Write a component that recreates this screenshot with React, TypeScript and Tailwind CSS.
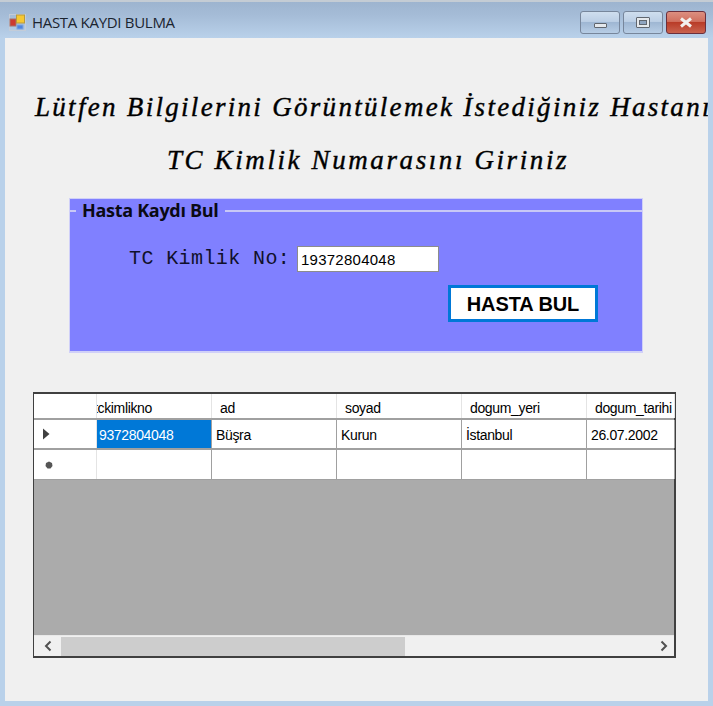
const columns = [
  { name: "tckimlikno", width: "w-[115px]", head: "pl-0", clip: true },
  { name: "ad", width: "w-[125px]", head: "pl-[8px]" },
  { name: "soyad", width: "w-[125px]", head: "pl-[8px]" },
  { name: "dogum_yeri", width: "w-[125px]", head: "pl-[8px]" },
  { name: "dogum_tarihi", width: "w-[88px]", head: "pl-[8px]" },
];

const values = ["9372804048", "Büşra", "Kurun", "İstanbul", "26.07.2002"];

function WindowButton({ kind }: { kind: "min" | "max" | "close" }) {
  if (kind === "close") {
    return (
      <div className="w-[40px] h-[23px] rounded-[3px] border border-[#6b2f3c] flex items-center justify-center bg-[linear-gradient(#dc8f80_0%,#d0705f_45%,#b93c28_50%,#c9634f_100%)]">
        <svg width="14" height="11" viewBox="0 0 14 11">
          <path d="M2 1.5 L12 9.5 M12 1.5 L2 9.5" stroke="#f2f0ee" strokeWidth="3" />
        </svg>
      </div>
    );
  }
  return (
    <div className="w-[40px] h-[23px] rounded-[3px] border border-[#77869b] flex items-center justify-center bg-[linear-gradient(#cfdeee_0%,#bccfe5_45%,#9fb7d3_50%,#b7cde5_100%)]">
      {kind === "min" ? (
        <div className="w-[13px] h-[5px] mt-[5px] bg-[#e4e8ec] border border-[#60666e] rounded-[1px]" />
      ) : (
        <div className="w-[14px] h-[11px] bg-[#e4e8ec] border border-[#60666e] rounded-[1px] flex items-center justify-center">
          <div className="w-[8px] h-[5px] bg-[#8ea4bf] border border-[#60666e]" />
        </div>
      )}
    </div>
  );
}

function AppIcon() {
  return (
    <svg width="17" height="17" viewBox="0 0 17 17" className="shrink-0">
      <rect x="0.5" y="0.5" width="16" height="16" fill="none" stroke="#c3ccd8" />
      <rect x="1" y="5" width="6" height="7" fill="#cc3a30" stroke="#a5706a" />
      <rect x="7.5" y="1" width="8" height="8" fill="#f6c832" stroke="#b99a3a" />
      <rect x="8" y="11" width="6" height="4" fill="#4f86e0" stroke="#7fa4dc" />
    </svg>
  );
}

export default function App() {
  return (
    <div className="w-[713px] h-[706px] overflow-hidden flex flex-col bg-[#b9d1ea]">
      <div className="h-[38px] shrink-0 flex bg-[linear-gradient(#9db4cf_0%,#a6bdd8_40%,#b9d1ea_100%)] border-t-2 border-[#c4ccd4]">
        <div className="pl-[9px] pt-[4px] flex items-center gap-[6px] h-[36px] flex-1">
          <AppIcon />
          <span className="text-[15px] text-[#1b2430] font-['Open_Sans',sans-serif] tracking-[-0.3px]">
            HASTA KAYDI BULMA
          </span>
        </div>
        <div className="flex gap-[3px] pt-[9px] pr-[7px]">
          <WindowButton kind="min" />
          <WindowButton kind="max" />
          <WindowButton kind="close" />
        </div>
      </div>

      <div className="mx-[5px] mb-[5px] flex-1 bg-[#f0f0f0] overflow-hidden flex flex-col">
        <div className="pl-[30px] pt-[53px] h-[161px] shrink-0 font-['Liberation_Serif',serif] italic text-black whitespace-nowrap [-webkit-text-stroke:0.4px_black]">
          <div className="text-[27px] leading-[32px] tracking-[2.3px]">
            Lütfen Bilgilerini Görüntülemek İstediğiniz Hastanın
          </div>
          <div className="text-[27px] leading-[32px] tracking-[2.6px] pl-[132px] mt-[21px]">
            TC Kimlik Numarasını Giriniz
          </div>
        </div>

        <div className="ml-[64px] mt-[-1px] w-[574px] h-[155px] shrink-0 bg-[#8080ff] border-b-2 border-x border-t border-[#d0d0f8] relative">
          <div className="absolute left-0 right-0 top-[11px] border-t-2 border-[#c8c8f6]" />
          <div className="absolute left-[6px] top-0 px-[6px] bg-[#8080ff] text-[18px] leading-[22px] font-bold text-[#0a0a14] font-['Open_Sans',sans-serif] tracking-[-0.3px]">
            Hasta Kaydı Bul
          </div>
          <div className="pt-[47px] pl-[59px] flex items-center h-[73px]">
            <span className="text-[20px] font-['Liberation_Mono',monospace] text-[#10102a] w-[168px] tracking-[0.4px] whitespace-nowrap">
              TC Kimlik No:
            </span>
            <div className="w-[142px] h-[26px] bg-white border border-[#8c8c8c] text-[15px] leading-[26px] pl-[3px] font-['Liberation_Sans',sans-serif] tracking-[0.25px] text-black">
              19372804048
            </div>
          </div>
          <div className="mt-[13px] ml-[378px] w-[150px] h-[37px] bg-white border-[3px] border-[#0078d7] flex items-center justify-center text-[20px] font-bold font-['Liberation_Sans',sans-serif] text-black tracking-[-0.1px]">
            HASTA BUL
          </div>
        </div>

        <div className="ml-[28px] mt-[39px] w-[643px] h-[266px] shrink-0 border-2 border-l border-[#404040] bg-[#ababab] flex flex-col font-['Liberation_Sans',sans-serif] text-[14px] tracking-[-0.35px] text-black">
          <div className="flex h-[26px] bg-white border-b-2 border-[#a0a0a0]">
            <div className="w-[63px] shrink-0 border-r border-[#e4e4e4]" />
            {columns.map((c) => (
              <div
                key={c.name}
                className={`${c.width} shrink-0 ${c.head} border-r border-[#e4e4e4] overflow-hidden leading-[28px] whitespace-nowrap`}
              >
                {c.clip ? <span className="block ml-[-3px]">{c.name}</span> : c.name}
              </div>
            ))}
          </div>
          <div className="flex h-[30px] bg-white border-b-2 border-[#a0a0a0]">
            <div className="w-[63px] shrink-0 border-r border-[#e4e4e4] flex items-center pl-[8px]">
              <svg width="8" height="12" viewBox="0 0 8 12">
                <path d="M1 0.5 L7.5 6 L1 11.5 Z" fill="#404040" />
              </svg>
            </div>
            {values.map((v, i) => (
              <div
                key={v}
                className={`${columns[i].width} shrink-0 border-r border-[#a0a0a0] leading-[30px] overflow-hidden whitespace-nowrap ${
                  i === 0 ? "bg-[#0078d7] text-white pl-[2px]" : "pl-[4px]"
                }`}
              >
                {v}
              </div>
            ))}
          </div>
          <div className="flex h-[29px] bg-white">
            <div className="w-[63px] shrink-0 border-r border-[#e4e4e4] flex items-center pl-[11px]">
              <svg width="8" height="8" viewBox="0 0 8 8">
                <path d="M4 0.5 L7 2 L7.5 5 L5.5 7.5 L2.5 7.5 L0.5 5 L1 2 Z" fill="#555555" />
              </svg>
            </div>
            {columns.map((c) => (
              <div key={c.name} className={`${c.width} shrink-0 border-r border-[#a0a0a0]`} />
            ))}
          </div>
          <div className="h-[1px] bg-[#a0a0a0]" />
          <div className="flex-1" />
          <div className="h-[21px] bg-[#f0f0f0] border-t border-[#e8e8e8] flex items-center">
            <div className="w-[27px] flex justify-center">
              <svg width="10" height="12" viewBox="0 0 10 12">
                <path d="M7.5 1.5 L3 6 L7.5 10.5" fill="none" stroke="#505050" strokeWidth="2" />
              </svg>
            </div>
            <div className="w-[344px] h-[19px] bg-[#cdcdcd]" />
            <div className="flex-1 flex justify-end pr-[5px]">
              <svg width="10" height="12" viewBox="0 0 10 12">
                <path d="M2.5 1.5 L7 6 L2.5 10.5" fill="none" stroke="#505050" strokeWidth="2" />
              </svg>
            </div>
          </div>
        </div>
      </div>
    </div>
  );
}
